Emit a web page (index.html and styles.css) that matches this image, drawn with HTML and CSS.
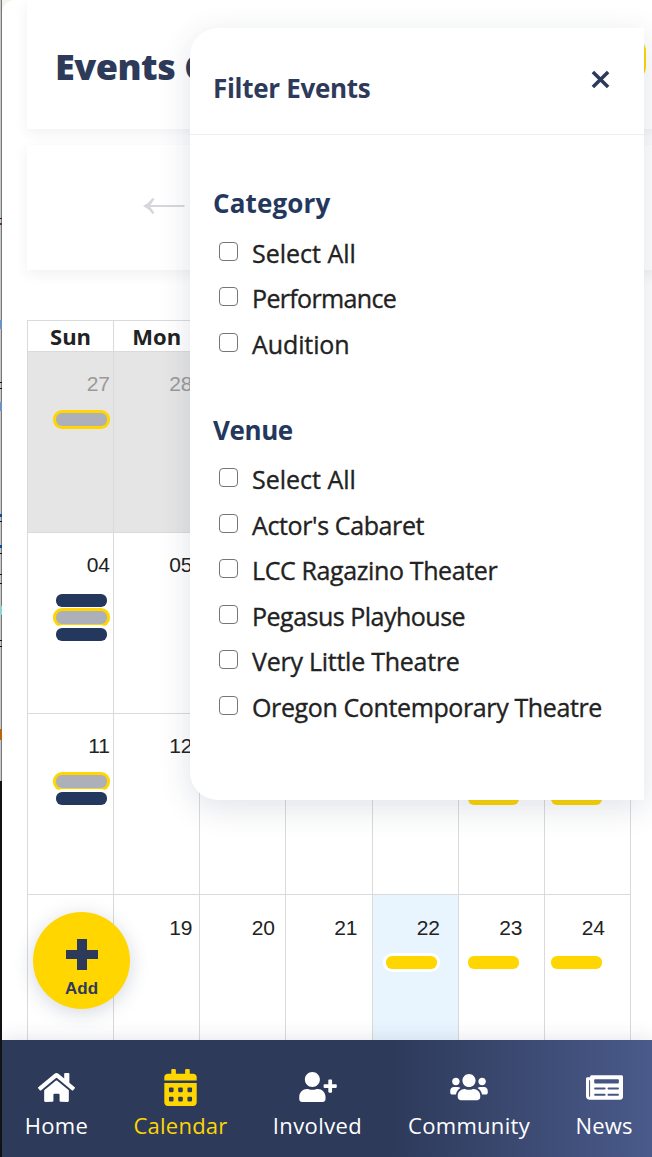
FILE: index.html
```
<!DOCTYPE html>
<html lang="en">
<head>
<meta charset="utf-8">
<title>Events Calendar</title>
<link rel="stylesheet" href="styles.css">
</head>
<body>
<div class="edge"></div>
<main class="app">
  <header class="card title-card">
    <h1 class="page-title">Events C</h1>
    <span class="filter-button"></span>
  </header>
  <section class="card month-card">
    <svg class="arrow" viewBox="0 0 42 18"><path d="M3 9H41.5" fill="none" stroke="#d5d7da" stroke-width="2"/><path d="M0 9Q6 6 9.500 1L11.500 2Q9 6 6.500 9Q9 12 11.500 16L9.500 17Q6 12 0 9Z" fill="#d5d7da"/></svg>
  </section>
  <section class="calendar">
    <div class="weekdays"><span>Sun</span><span>Mon</span><span></span><span></span><span></span><span></span><span></span></div>
    <div class="week">
      <div class="cells"><i class="other"></i><i class="other"></i><i class="other"></i><i class="other"></i><i></i><i></i><i></i></div>
      <div class="days">
        <div class="day muted">27<b class="bar gray"></b></div><div class="day muted">28</div>
      </div>
    </div>
    <div class="week">
      <div class="cells"><i></i><i></i><i></i><i></i><i></i><i></i><i></i></div>
      <div class="days">
        <div class="day">04<b class="bar navy"></b><b class="bar gray"></b><b class="bar navy"></b></div><div class="day">05</div>
      </div>
    </div>
    <div class="week">
      <div class="cells"><i></i><i></i><i></i><i></i><i></i><i></i><i></i></div>
      <div class="days">
        <div class="day">11<b class="bar gray"></b><b class="bar navy"></b></div><div class="day">12</div><div class="day"></div><div class="day"></div><div class="day"></div><div class="day bars-only"><b class="bar gold"></b><b class="bar gold"></b></div><div class="day bars-only"><b class="bar gold"></b><b class="bar gold"></b></div>
      </div>
    </div>
    <div class="week low">
      <div class="cells"><i></i><i></i><i></i><i></i><i class="today"></i><i></i><i></i></div>
      <div class="days">
        <div class="day"></div><div class="day">19</div><div class="day">20</div><div class="day">21</div><div class="day">22<b class="bar gold"></b></div><div class="day">23<b class="bar gold"></b></div><div class="day">24<b class="bar gold"></b></div>
      </div>
    </div>
  </section>
</main>

<aside class="panel">
  <header class="panel-head">
    <h2 class="panel-title">Filter Events</h2>
    <svg class="close" viewBox="0 0 20 20"><path d="M2 2L18 18M18 2L2 18" fill="none" stroke="#2d3a5a" stroke-width="3.700"/></svg>
  </header>
  <div class="panel-body">
    <h3 class="group category">Category</h3>
    <label class="option o1"><input type="checkbox"><span>Select All</span></label>
    <label class="option o2"><input type="checkbox"><span>Performance</span></label>
    <label class="option o3"><input type="checkbox"><span>Audition</span></label>
    <h3 class="group venue">Venue</h3>
    <label class="option o1"><input type="checkbox"><span>Select All</span></label>
    <label class="option o4"><input type="checkbox"><span>Actor's Cabaret</span></label>
    <label class="option o5"><input type="checkbox"><span>LCC Ragazino Theater</span></label>
    <label class="option o6"><input type="checkbox"><span>Pegasus Playhouse</span></label>
    <label class="option o7"><input type="checkbox"><span>Very Little Theatre</span></label>
    <label class="option o8"><input type="checkbox"><span>Oregon Contemporary Theatre</span></label>
  </div>
</aside>

<button class="add">
  <svg class="plus" viewBox="0 0 32 31"><path d="M11 0h10v11h11v9H21v11H11V20H0v-9h11z" fill="#2d3a5a"/></svg>
  <span>Add</span>
</button>

<nav class="tabs">
  <a class="tab home"><svg width="37" height="33" viewBox="0 0 576 512"><path d="M280.37 148.26L96 300.11V464a16 16 0 0 0 16 16l112.060-.29a16 16 0 0 0 15.920-16V368a16 16 0 0 1 16-16h64a16 16 0 0 1 16 16v95.640a16 16 0 0 0 16 16.050L464 480a16 16 0 0 0 16-16V300L295.670 148.260a12.190 12.190 0 0 0-15.300 0zM571.600 251.470L488 182.560V44.050a12 12 0 0 0-12-12h-56a12 12 0 0 0-12 12v72.610L318.470 43a48 48 0 0 0-61 0L4.340 251.470a12 12 0 0 0-1.600 16.900l25.500 31A12 12 0 0 0 45.150 301l235.220-193.740a12.190 12.190 0 0 1 15.300 0L530.900 301a12 12 0 0 0 16.900-1.600l25.500-31a12 12 0 0 0-1.700-16.930z"/></svg><span>Home</span></a>
  <a class="tab cal"><svg width="33" height="37" viewBox="0 0 448 512"><path d="M0 464c0 26.500 21.500 48 48 48h352c26.500 0 48-21.500 48-48V192H0v272zm320-196c0-6.600 5.400-12 12-12h40c6.600 0 12 5.400 12 12v40c0 6.600-5.400 12-12 12h-40c-6.600 0-12-5.400-12-12v-40zm0 128c0-6.600 5.400-12 12-12h40c6.600 0 12 5.400 12 12v40c0 6.600-5.400 12-12 12h-40c-6.600 0-12-5.400-12-12v-40zM192 268c0-6.600 5.400-12 12-12h40c6.600 0 12 5.400 12 12v40c0 6.600-5.400 12-12 12h-40c-6.600 0-12-5.400-12-12v-40zm0 128c0-6.600 5.400-12 12-12h40c6.600 0 12 5.400 12 12v40c0 6.600-5.400 12-12 12h-40c-6.600 0-12-5.400-12-12v-40zM64 268c0-6.600 5.400-12 12-12h40c6.600 0 12 5.400 12 12v40c0 6.600-5.400 12-12 12H76c-6.600 0-12-5.400-12-12v-40zm0 128c0-6.600 5.400-12 12-12h40c6.600 0 12 5.400 12 12v40c0 6.600-5.400 12-12 12H76c-6.600 0-12-5.400-12-12v-40zM400 64h-48V16c0-8.800-7.200-16-16-16h-32c-8.800 0-16 7.200-16 16v48H160V16c0-8.800-7.200-16-16-16h-32c-8.800 0-16 7.200-16 16v48H48C21.500 64 0 85.500 0 112v48h448v-48c0-26.500-21.500-48-48-48z"/></svg><span>Calendar</span></a>
  <a class="tab inv"><svg width="38" height="30" viewBox="0 0 640 512"><path d="M624 208h-64v-64c0-8.800-7.200-16-16-16h-32c-8.800 0-16 7.200-16 16v64h-64c-8.800 0-16 7.200-16 16v32c0 8.800 7.200 16 16 16h64v64c0 8.800 7.200 16 16 16h32c8.800 0 16-7.200 16-16v-64h64c8.800 0 16-7.200 16-16v-32c0-8.800-7.200-16-16-16zm-400 48c70.700 0 128-57.300 128-128S294.700 0 224 0 96 57.300 96 128s57.300 128 128 128zm89.600 32h-16.700c-22.200 10.200-46.900 16-72.900 16s-50.600-5.800-72.900-16h-16.700C60.200 288 0 348.200 0 422.400V464c0 26.500 21.500 48 48 48h352c26.500 0 48-21.500 48-48v-41.600c0-74.200-60.200-134.400-134.400-134.400z"/></svg><span>Involved</span></a>
  <a class="tab com"><svg width="38" height="30" viewBox="0 0 640 512"><path d="M96 224c35.300 0 64-28.700 64-64s-28.700-64-64-64-64 28.700-64 64 28.700 64 64 64zm448 0c35.300 0 64-28.700 64-64s-28.700-64-64-64-64 28.700-64 64 28.700 64 64 64zm32 32h-64c-17.600 0-33.500 7.100-45.100 18.600 40.300 22.100 68.900 62 75.100 109.400h66c17.700 0 32-14.300 32-32v-32c0-35.300-28.700-64-64-64zm-256 0c61.900 0 112-50.100 112-112S381.900 32 320 32 208 82.100 208 144s50.100 112 112 112zm76.800 32h-8.300c-20.800 10-43.900 16-68.500 16s-47.600-6-68.500-16h-8.300C179.600 288 128 339.600 128 403.200V432c0 26.500 21.500 48 48 48h288c26.500 0 48-21.500 48-48v-28.800c0-63.600-51.600-115.200-115.200-115.200zm-223.700-13.400C161.500 263.100 145.600 256 128 256H64c-35.300 0-64 28.700-64 64v32c0 17.700 14.300 32 32 32h65.900c6.300-47.400 34.900-87.300 75.200-109.400z"/></svg><span>Community</span></a>
  <a class="tab news"><svg width="37" height="33" viewBox="0 0 576 512"><path fill-rule="evenodd" d="M552 64H88c-13.250 0-24 10.750-24 24v8H24c-13.250 0-24 10.750-24 24v272c0 30.930 25.070 56 56 56h472c26.500 0 48-21.500 48-48V88c0-13.250-10.750-24-24-24zM56 400a8 8 0 0 1-8-8V144h16v248a8 8 0 0 1-8 8zM140 384a12 12 0 0 1-12-12v-8a12 12 0 0 1 12-12h152a12 12 0 0 1 12 12v8a12 12 0 0 1-12 12zM348 384a12 12 0 0 1-12-12v-8a12 12 0 0 1 12-12h152a12 12 0 0 1 12 12v8a12 12 0 0 1-12 12zM140 288a12 12 0 0 1-12-12v-8a12 12 0 0 1 12-12h152a12 12 0 0 1 12 12v8a12 12 0 0 1-12 12zM348 288a12 12 0 0 1-12-12v-8a12 12 0 0 1 12-12h152a12 12 0 0 1 12 12v8a12 12 0 0 1-12 12zM140 192a12 12 0 0 1-12-12v-40a12 12 0 0 1 12-12h360a12 12 0 0 1 12 12v40a12 12 0 0 1-12 12z"/></svg><span>News</span></a>
</nav>
</body>
</html>
```
FILE: styles.css
```
* { box-sizing: border-box; }
body {
  margin: 0;
  width: 652px;
  height: 1157px;
  overflow: hidden;
  position: relative;
  display: flex;
  background: #f4f4ee;
  font-family: "Open Sans", "Noto Sans", sans-serif;
  color: #222;
}
h1, h2, h3 { margin: 0; white-space: nowrap; }

/* sliver of the window behind the app */
.edge {
  width: 2px;
  height: 1157px;
  flex: none;
  background:
    linear-gradient(#223 0 0) 0 218px / 2px 1px no-repeat,
    linear-gradient(#703020 0 0) 0 223px / 2px 2px no-repeat,
    linear-gradient(#6b94c4 0 0) 0 320px / 2px 9px no-repeat,
    linear-gradient(#111 0 0) 0 382px / 2px 1px no-repeat,
    linear-gradient(#111 0 0) 0 388px / 2px 1px no-repeat,
    linear-gradient(#6b94c4 0 0) 0 402px / 2px 9px no-repeat,
    linear-gradient(#0a4ea0 0 0) 0 514px / 2px 3px no-repeat,
    linear-gradient(#111 0 0) 0 521px / 2px 1px no-repeat,
    linear-gradient(#0a4ea0 0 0) 0 545px / 2px 3px no-repeat,
    linear-gradient(#111 0 0) 0 553px / 2px 1px no-repeat,
    linear-gradient(#111 0 0) 0 574px / 2px 1px no-repeat,
    linear-gradient(#111 0 0) 0 583px / 2px 1px no-repeat,
    linear-gradient(#8fd5d8 0 0) 0 606px / 2px 9px no-repeat,
    linear-gradient(#111 0 0) 0 640px / 2px 1px no-repeat,
    linear-gradient(#111 0 0) 0 646px / 2px 1px no-repeat,
    linear-gradient(#b86410 0 0) 0 729px / 2px 11px no-repeat,
    linear-gradient(#101214 0 0) 0 781px / 2px 376px no-repeat,
    linear-gradient(90deg, #c8c8c8 0 1px, #777 1px);
}
.app {
  flex: none;
  width: 650px;
  height: 1157px;
  overflow: hidden;
  padding-left: 25px;
  background: #fff;
  border-top-left-radius: 13px;
}
.card { width: 660px; background: #fff; box-shadow: 0 4px 12px rgba(45, 58, 90, .07); }
.title-card { height: 129px; display: flex; align-items: center; padding: 0 0 12px 28px; }
.page-title { width: 551px; font-size: 36px; line-height: 48px; font-weight: 800; letter-spacing: -.5px; color: #2d3a5a; padding-top: 17px; }
.filter-button { width: 40px; height: 40px; border-radius: 12px; background: #ffd600; }
.month-card { height: 125px; margin-top: 16px; padding: 52px 0 0 116px; }
.arrow { display: block; width: 42px; height: 18px; }

.calendar { width: 604px; margin-top: 50px; border-left: 1px solid #dadada; }
.weekdays { display: grid; grid-template-columns: repeat(7, 1fr); height: 32px; border-top: 1px solid #dadada; border-bottom: 1px solid #dadada; }
.weekdays span { border-right: 1px solid #dadada; text-align: center; font-size: 22px; font-weight: 700; line-height: 30px; }
.week { display: grid; height: 181px; }
.cells, .days { grid-area: 1 / 1; display: grid; }
.cells { grid-template-columns: repeat(7, 1fr); }
.cells i { border-right: 1px solid #dadada; border-bottom: 1px solid #dadada; }
.cells .other { background: #e5e5e5; }
.cells .today { background: #e8f5ff; }
.days { width: 577px; grid-template-columns: repeat(7, 82.500px); }
.day { display: flex; flex-direction: column; align-items: flex-end; padding: 20px .5px 0 0; font: 21px/24px "Liberation Sans", Arial, sans-serif; }
.low .day { padding-top: 21px; }
.muted { color: #999; }
.bar { width: 51px; height: 12.500px; margin: 0 3.400px 4.500px 0; border-radius: 6px; box-shadow: 0 0 0 3px #fff; }
.bar:first-of-type { margin-top: 17px; }
.low .bar:first-of-type { margin-top: 16px; }
.bars-only { padding-top: 44px; }
.navy { background: #24385e; }
.gold { background: #ffd600; }
.gray { background: #adb0b8; box-shadow: 0 0 0 3px #ffd600; }

.panel {
  position: absolute;
  left: 190px;
  top: 28px;
  width: 454px;
  height: 772px;
  background: #fff;
  border-radius: 28px 0 0 28px;
  box-shadow: 0 8px 32px rgba(45, 58, 90, .14);
}
.panel-head { display: flex; justify-content: space-between; align-items: flex-start; height: 107px; padding: 42px 34px 0 23px; border-bottom: 1px solid #eceef0; }
.panel-title { font-size: 26px; line-height: 36px; font-weight: 700; letter-spacing: -.3px; color: #2d3a5a; }
.close { width: 19px; height: 19px; }
.panel-body { padding: 50px 23px 0; }
.group { font-size: 26px; line-height: 36px; font-weight: 700; color: #24385e; letter-spacing: 0; }
.category { letter-spacing: .15px; margin-bottom: 9px; }
.venue { letter-spacing: -.4px; margin: 45px 0 9px; }
.option { display: flex; align-items: center; height: 45.500px; padding-left: 6px; font-size: 25px; letter-spacing: -.38px; white-space: nowrap; -webkit-text-stroke: .35px #222; }
.option input { appearance: none; width: 19px; height: 19px; margin: 0 14px 3px 0; border: 1.500px solid #767676; border-radius: 4px; background: #fff; }
.o1 { letter-spacing: 0; }
.o2 { letter-spacing: -.65px; }
.o3 { letter-spacing: -.1px; }
.o6 { letter-spacing: -.5px; }
.o7 { letter-spacing: -.25px; }

.add {
  position: absolute;
  left: 33px;
  top: 912px;
  width: 97px;
  height: 97px;
  border: 0;
  border-radius: 50%;
  padding: 27px 0 0;
  display: flex;
  flex-direction: column;
  align-items: center;
  gap: 9px;
  background: #ffd600;
  color: #2d3a5a;
  font: 700 17px/20px "Liberation Sans", Arial, sans-serif;
  box-shadow: 0 4px 20px rgba(45, 58, 90, .2);
}
.plus { width: 32px; height: 31px; }

.tabs {
  position: absolute;
  left: 2px;
  right: 0;
  bottom: 0;
  height: 117px;
  display: flex;
  gap: 46px;
  padding: 27px 0 0 23px;
  background: linear-gradient(90deg, #2d3a5a 60%, #4a5a8a);
  box-shadow: 0 -4px 16px rgba(45, 58, 90, .1);
  color: #fff;
  font-size: 22px;
}
.tab { flex: none; display: grid; grid-template-rows: 40px 36px; justify-items: center; align-items: center; justify-content: center; }
.tab svg { fill: currentColor; }
.tab span { line-height: 36px; white-space: nowrap; }
.home { width: 63px; letter-spacing: .3px; }
.cal { width: 93px; color: #ffd600; letter-spacing: .25px; }
.inv { width: 89px; letter-spacing: .4px; }
.com { width: 122px; letter-spacing: .3px; }
.news { width: 56px; letter-spacing: .2px; }
```
